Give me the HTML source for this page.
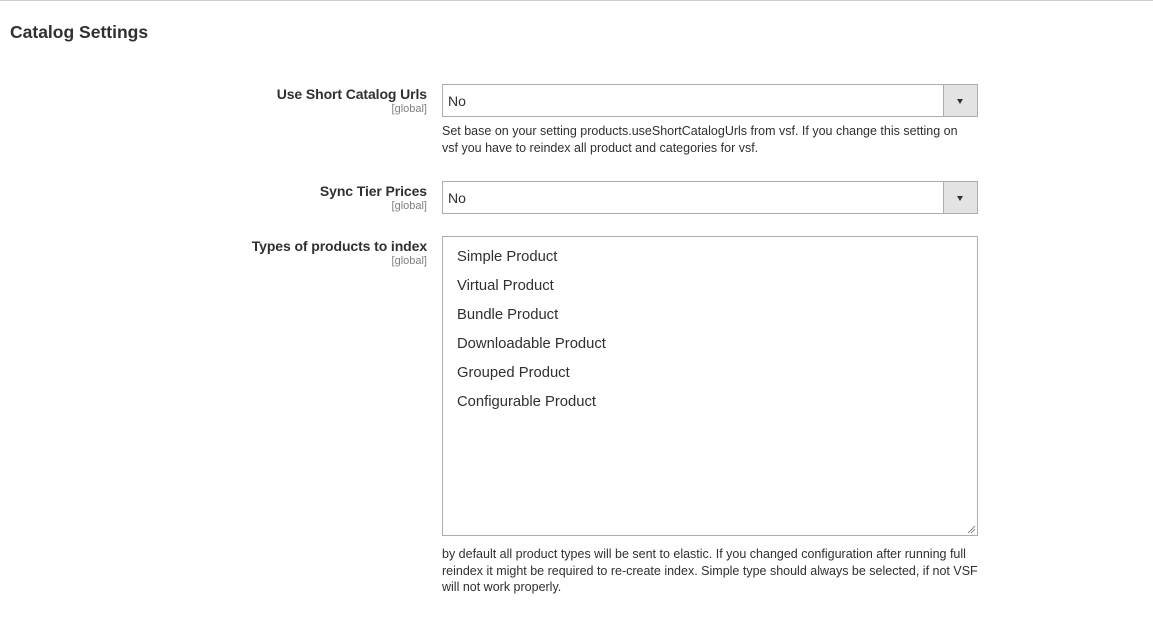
<!DOCTYPE html>
<html><head><style>
body{margin:0;width:1153px;height:639px;background:#fff;font-family:"Liberation Sans",sans-serif;color:#303030;position:relative;overflow:hidden}
.a{position:absolute}
.lbl{position:absolute;right:726px;text-align:right;font-size:14px;font-weight:bold;color:#303030;white-space:nowrap;letter-spacing:-0.1px}
.g{position:absolute;right:726px;font-size:11px;color:#808080}
.sel{position:absolute;left:442px;width:534px;height:31px;border:1px solid #adadad;box-sizing:content-box}
.sel span{position:absolute;left:5px;top:8px;font-size:14px;color:#303030}
.sel i{position:absolute;right:0;top:0;width:33px;height:31px;background:#e3e3e3;border-left:1px solid #adadad}
.sel i:after{content:"";position:absolute;left:13px;top:14px;border-left:3.5px solid transparent;border-right:3.5px solid transparent;border-top:5px solid #333}
.note{position:absolute;left:442px;font-size:12.5px;line-height:16.5px;color:#303030;width:560px;white-space:nowrap}
.opt{position:absolute;left:457px;font-size:14.8px;color:#303030}
</style></head><body>
<div class="a" style="left:0;top:0;width:1153px;height:1px;background:#ccc"></div>
<div class="a" style="left:10px;top:22px;font-size:17.5px;font-weight:bold;color:#303030">Catalog Settings</div>

<div class="lbl" style="top:86px">Use Short Catalog Urls</div>
<div class="g" style="top:103px">[global]</div>
<div class="sel" style="top:84px"><span>No</span><i></i></div>
<div class="note" style="top:123px">Set base on your setting products.useShortCatalogUrls from vsf. If you change this setting on<br>vsf you have to reindex all product and categories for vsf.</div>

<div class="lbl" style="top:183px">Sync Tier Prices</div>
<div class="g" style="top:200px">[global]</div>
<div class="sel" style="top:181px"><span>No</span><i></i></div>

<div class="lbl" style="top:238px">Types of products to index</div>
<div class="g" style="top:255px">[global]</div>
<div class="a" style="left:442px;top:236px;width:534px;height:298px;border:1px solid #adadad"></div>
<svg class="a" style="left:967px;top:525px" width="9" height="9"><path d="M1 8L8 1M4 8L8 4" stroke="#888" stroke-width="1"/></svg>
<div class="opt" style="top:249px">Simple Product</div>
<div class="opt" style="top:278px">Virtual Product</div>
<div class="opt" style="top:307px">Bundle Product</div>
<div class="opt" style="top:336px">Downloadable Product</div>
<div class="opt" style="top:365px">Grouped Product</div>
<div class="opt" style="top:394px">Configurable Product</div>

<div class="note" style="top:546px">by default all product types will be sent to elastic. If you changed configuration after running full<br>reindex it might be required to re-create index. Simple type should always be selected, if not VSF<br>will not work properly.</div>
</body></html>
